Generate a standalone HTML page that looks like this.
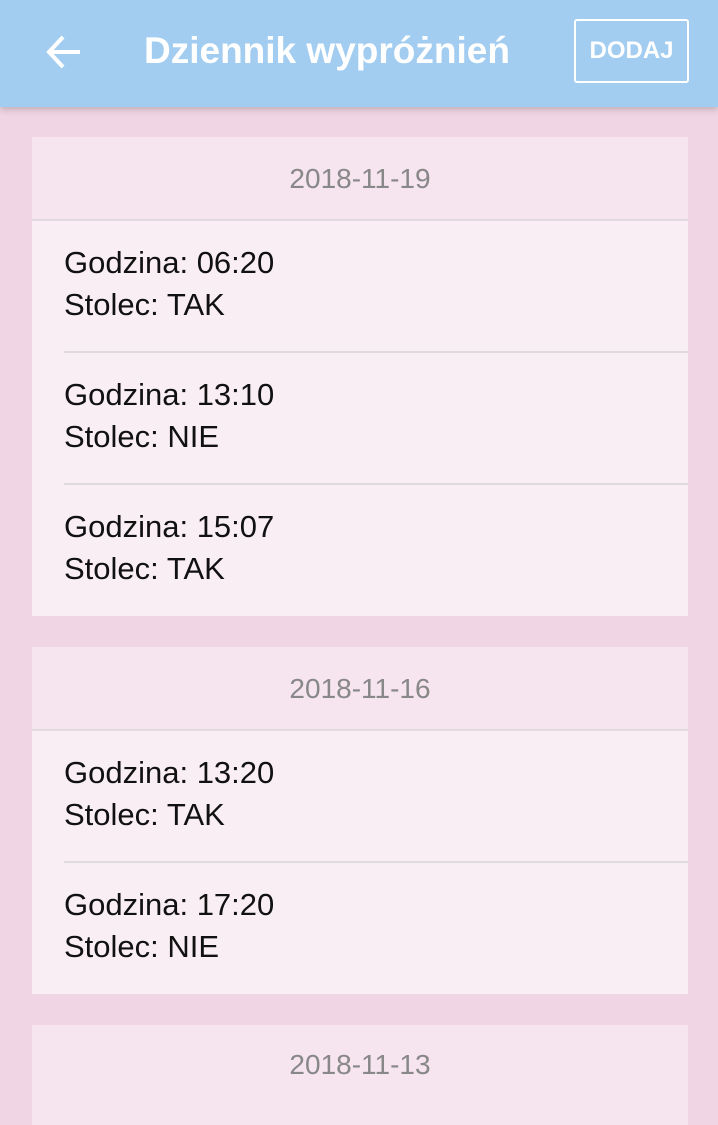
<!DOCTYPE html>
<html><head><meta charset="utf-8"><style>
*{margin:0;padding:0;box-sizing:border-box}
body{width:718px;height:1105px;overflow:hidden;background:#f0d6e4;font-family:"Liberation Sans",sans-serif;position:relative}
.hdr{position:absolute;left:0;top:0;width:718px;height:107px;background:#a2cdf0;box-shadow:0 3px 6px rgba(0,0,0,.18);z-index:2}
.title{position:absolute;left:144px;top:30px;font-size:37px;color:#fff;font-weight:bold;letter-spacing:0px}
.btn{position:absolute;left:574px;top:19px;width:115px;height:64px;border:2px solid #fff;border-radius:3px;color:#fff;font-size:24px;font-weight:bold;text-align:center;line-height:60px}
.card{position:absolute;left:32px;width:656px;background:#f8eef3}
.dh{height:84px;background:#f6e4ee;border-bottom:2px solid #e2dadf;text-align:center;color:#888;font-size:28px;line-height:84px}
.it{height:132px;margin-left:32px;border-bottom:2px solid #e0dade;padding-top:21px;font-size:31px;color:#111;line-height:42px}
.it:last-child{border-bottom:none;height:131px}
</style></head><body>
<div class="hdr">
<svg style="position:absolute;left:46px;top:34px" width="36" height="36" viewBox="0 0 36 36"><path d="M34 18H4M17 3L3 18L17 33" stroke="#fff" stroke-width="4" fill="none"/></svg>
<div class="title">Dziennik wypróżnień</div>
<div class="btn">DODAJ</div>
</div>
<div class="card" style="top:137px">
<div class="dh">2018-11-19</div>
<div class="it">Godzina: 06:20<br>Stolec: TAK</div>
<div class="it">Godzina: 13:10<br>Stolec: NIE</div>
<div class="it">Godzina: 15:07<br>Stolec: TAK</div>
</div>
<div class="card" style="top:647px">
<div class="dh">2018-11-16</div>
<div class="it">Godzina: 13:20<br>Stolec: TAK</div>
<div class="it">Godzina: 17:20<br>Stolec: NIE</div>
</div>
<div class="card" style="top:1025px;height:100px;background:#f6e4ee">
<div class="dh" style="line-height:80px;border-bottom:none">2018-11-13</div>
</div>
</body></html>
